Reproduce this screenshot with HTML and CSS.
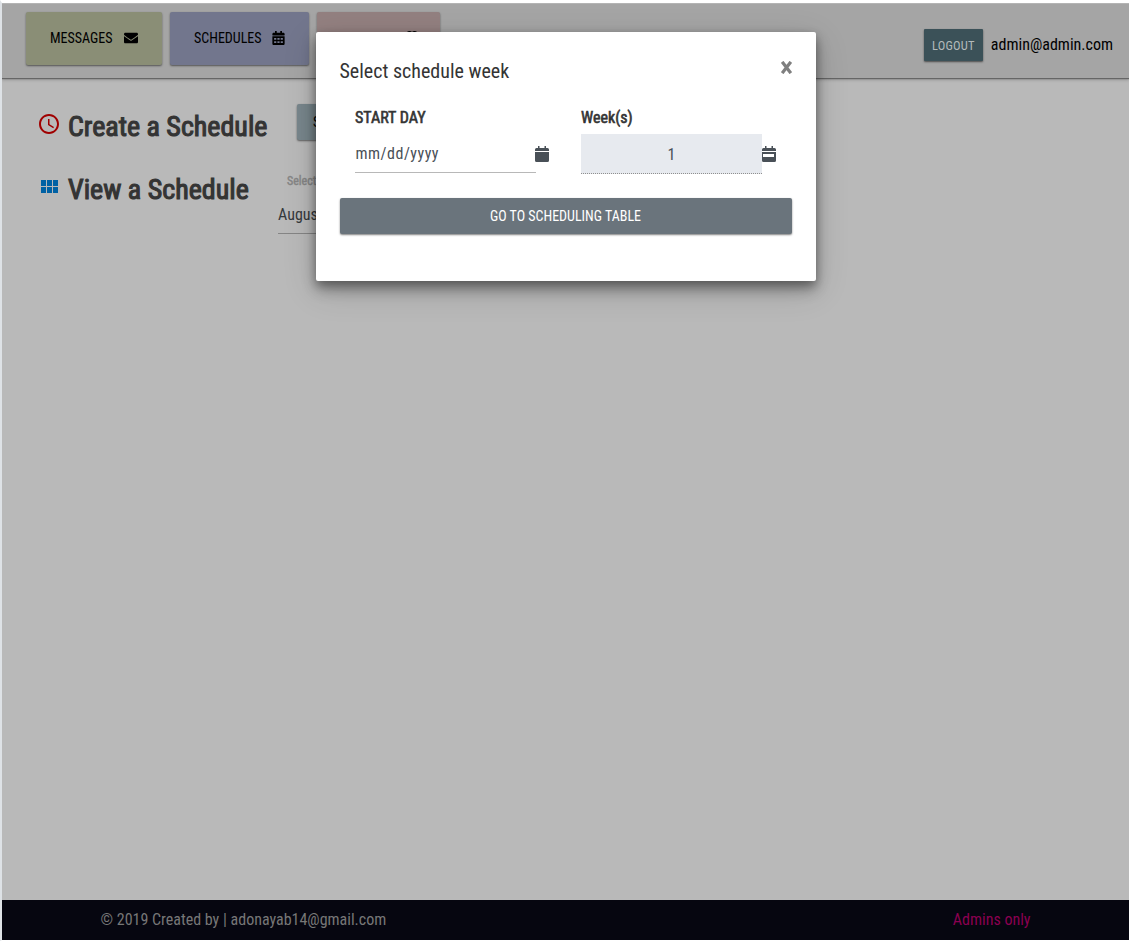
FILE: index.html
```html
<!DOCTYPE html>
<html lang="en">
<head>
<meta charset="utf-8">
<title>Schedules</title>
<link rel="stylesheet" href="styles.css">
</head>
<body>
<div class="page">
  <header class="topbar">
    <nav class="nav">
      <a class="tab tab-messages"><span class="t">MESSAGES</span>
        <svg class="ico mail" viewBox="0 0 512 512"><path d="M502.300 190.800c3.900-3.100 9.700-.2 9.700 4.700V400c0 26.500-21.500 48-48 48H48c-26.500 0-48-21.500-48-48V195.600c0-5 5.700-7.800 9.700-4.700 22.400 17.400 52.100 39.500 154.100 113.600 21.100 15.400 56.700 47.800 92.200 47.600 35.700.3 72-32.800 92.300-47.600 102-74.100 131.600-96.300 154-113.700zM256 320c23.200.4 56.600-29.200 73.400-41.400 132.700-96.300 142.800-104.700 173.400-128.700 5.800-4.500 9.200-11.500 9.200-18.900v-19c0-26.500-21.500-48-48-48H48c-26.500 0-48 21.500-48 48v19c0 7.400 3.400 14.300 9.200 18.900 30.600 23.900 40.700 32.400 173.400 128.700 16.800 12.200 50.200 41.800 73.400 41.400z"/></svg>
      </a>
      <a class="tab tab-schedules"><span class="t">SCHEDULES</span>
        <svg class="ico cal" viewBox="0 0 448 512"><path fill-rule="evenodd" d="M12 192h424c6.600 0 12 5.400 12 12v260c0 26.500-21.500 48-48 48H48c-26.500 0-48-21.500-48-48V204c0-6.600 5.400-12 12-12zM64 256v64h80v-64zM184 256v64h80v-64zM304 256v64h80v-64zM64 376v64h80v-64zM184 376v64h80v-64zM304 376v64h80v-64zM448 148v-36c0-26.500-21.500-48-48-48h-48V12c0-6.600-5.400-12-12-12h-40c-6.600 0-12 5.400-12 12v52H160V12c0-6.600-5.400-12-12-12h-40c-6.600 0-12 5.400-12 12v52H48C21.500 64 0 85.500 0 112v36c0 6.600 5.400 12 12 12h424c6.600 0 12-5.400 12-12z"/></svg>
      </a>
      <a class="tab tab-users">
        <svg class="ico group" viewBox="0 0 18 14"><circle cx="6.500" cy="3" r="3"/><circle cx="11.500" cy="3" r="3"/><path d="M1 14c0-9 8-9 8-3 0-6 8-6 8 3z"/></svg>
      </a>
    </nav>
    <div class="account"><span class="logout"><span class="t">LOGOUT</span></span><span class="t email">admin@admin.com</span></div>
  </header>
  <main class="content">
    <div class="row create">
      <svg class="clock" viewBox="0 0 24 24"><path d="M11.990 2C6.470 2 2 6.480 2 12s4.470 10 9.990 10C17.520 22 22 17.520 22 12S17.520 2 11.990 2zM12 20c-4.420 0-8-3.580-8-8s3.580-8 8-8 8 3.580 8 8-3.580 8-8 8zm.5-13H11v6l5.250 3.150.75-1.230-4.500-2.670z"/></svg>
      <h2 class="heading"><span class="t">Create a Schedule</span></h2>
      <span class="start">START</span>
    </div>
    <div class="row view">
      <svg class="grid" viewBox="0 0 24 24"><path d="M4 11h5V5H4v6zm0 7h5v-6H4v6zm6 0h5v-6h-5v6zm6 0h5v-6h-5v6zm-6-7h5V5h-5v6zm6-6v6h5V5h-5z"/></svg>
      <h2 class="heading"><span class="t">View a Schedule</span></h2>
      <div class="picker"><div class="picker-label">Select</div><div class="picker-value">August</div></div>
    </div>
  </main>
  <footer class="footer"><span class="t">© 2019 Created by | adonayab14@gmail.com</span><span class="t admins">Admins only</span></footer>
</div>
<section class="modal">
  <div class="modal-head"><span class="t title">Select schedule week</span>
    <svg class="close" viewBox="0 0 10 12"><path d="M1 .8L9 11.200M9 .8L1 11.200"/></svg>
  </div>
  <div class="fields">
    <div class="field">
      <div class="label"><span class="t">START DAY</span></div>
      <div class="control"><div class="input date"><span class="t">mm/dd/yyyy</span></div>
        <svg class="fico fico-day" viewBox="0 0 15 16"><path d="M0 6h14v8.500Q14 16 12.500 16h-11Q0 16 0 14.500zM0 5V3.500Q0 2 1.500 2H3V0h1.500v2h5V0H11v2h1.500Q14 2 14 3.500V5z"/></svg>
      </div>
    </div>
    <div class="field">
      <div class="label"><span class="t">Week(s)</span></div>
      <div class="control"><div class="input weeks">1</div>
        <svg class="fico" viewBox="0 0 15 16"><path fill-rule="evenodd" d="M0 6h14v8.500Q14 16 12.500 16h-11Q0 16 0 14.500zM1 8v3h11V8zM0 5V3.500Q0 2 1.500 2H3V0h1.500v2h5V0H11v2h1.500Q14 2 14 3.500V5z"/></svg>
      </div>
    </div>
  </div>
  <div class="go"><span class="t">GO TO SCHEDULING TABLE</span></div>
</section>
</body>
</html>
```
FILE: styles.css
```css
* { box-sizing: border-box; }
body { margin: 0; background: #fff; font-family: "Roboto Condensed", Roboto, sans-serif; font-stretch: 75%; font-size: 16px; line-height: 24px; color: #343434; }
.page { height: 941px; border-left: 2px solid #dee2e6; border-top: 3px solid #fff; border-bottom: 1px solid #fff; display: flex; flex-direction: column; background: #b9b9b9; overflow: hidden; }
.t { white-space: nowrap; }
.topbar { height: 75px; flex: none; background: #a5a5a5; border-top: 1px solid #b4b4b4; box-shadow: 0 1px 1px #666, 0 2px 3px rgba(0,0,0,.2); display: flex; justify-content: space-between; padding: 8px 16px 0 24px; color: #000; }
.nav { display: flex; gap: 8px; }
.tab { height: 53px; border-radius: 2px; display: flex; justify-content: space-between; padding: 14px 24px; font-size: 14px; box-shadow: 0 1px 2px rgba(0,0,0,.5); }
.tab-messages { width: 136px; background: #8a8e76; }
.tab-schedules { width: 139px; background: #72768d; }
.tab-users { width: 123px; background: #938080; }
.ico { fill: #000; height: 14px; margin-top: 5px; flex: none; }
.mail { width: 14px; }
.cal { width: 13px; }
.group { width: 18px; margin-left: 62px; margin-top: 5px; }
.account { display: flex; align-items: flex-start; padding-top: 17px; gap: 8px; }
.logout { width: 59px; height: 32px; border-radius: 1px; background: #3b5158; color: #b4babb; font-size: 12.500px; letter-spacing: .2px; line-height: 34px; text-align: center; box-shadow: 0 1px 2px rgba(0,0,0,.55); }
.email { line-height: 32px; }
.content { flex: 1; padding: 18px 0 0 35px; }
.row { display: flex; height: 63px; }
.clock, .grid { width: 24px; height: 24px; margin-top: 16px; margin-right: 7px; }
.clock { fill: #a00000; }
.grid { fill: #0061a4; }
.heading { margin: 11px 0 0; font-size: 28px; font-weight: 400; -webkit-text-stroke: 1.1px #343434; line-height: 40px; width: 200px; }
.start { margin: 8px 0 0 29px; width: 80px; height: 36px; border-radius: 2px; background: #78868c; padding-left: 16px; font-size: 14px; line-height: 36px; color: #000; box-shadow: 0 1px 2px rgba(0,0,0,.5); }
.picker { margin-left: 10px; width: 200px; height: 75px; border-bottom: 1px solid #858585; }
.picker-label { font-size: 12px; -webkit-text-stroke: .4px #858585; color: #858585; padding: 10px 0 0 9px; }
.picker-value { padding-top: 10px; color: #35383c; }
.footer { height: 40px; flex: none; background: #060610; color: #777; display: flex; justify-content: space-between; padding: 0 98.5px 0 98.5px; line-height: 39px; }
.admins { color: #8b0050; }
.modal { position: absolute; left: 316px; top: 32px; width: 500px; height: 249px; background: #fff; border-radius: 2px; padding: 24px; box-shadow: 0 8px 14px rgba(0,0,0,.35), 0 3px 8px rgba(0,0,0,.2), 0 9px 34px rgba(0,0,0,.16); }
.modal-head { display: flex; justify-content: space-between; height: 49px; }
.title { font-size: 20px; line-height: 30px; margin-left: -.5px; }
.close { width: 11px; height: 13px; margin-top: 5px; stroke: #7f7f7f; stroke-width: 3; }
.fields { display: flex; height: 93px; }
.field { width: 226px; padding-left: 15px; }
.label { height: 29px; line-height: 26px; -webkit-text-stroke: .6px #343434; }
.control { display: flex; color: #495057; }
.input { width: 181px; height: 40px; }
.date { height: 39px; line-height: 40px; border-bottom: 1px solid #b8b8b8; letter-spacing: .5px; padding-left: .5px; }
.weeks { background: #e7eaef; border-bottom: 1px dotted #8f8f8f; text-align: center; line-height: 42px; }
.fico { width: 15px; height: 16px; margin-top: 12px; fill: #495057; }
.fico-day { margin-left: -.6px; }
.go { height: 36px; background: #6a747c; color: #fff; text-align: center; font-size: 14px; line-height: 36px; border-radius: 2px; box-shadow: 0 1px 2px rgba(0,0,0,.5); padding-right: 1px; }
```
